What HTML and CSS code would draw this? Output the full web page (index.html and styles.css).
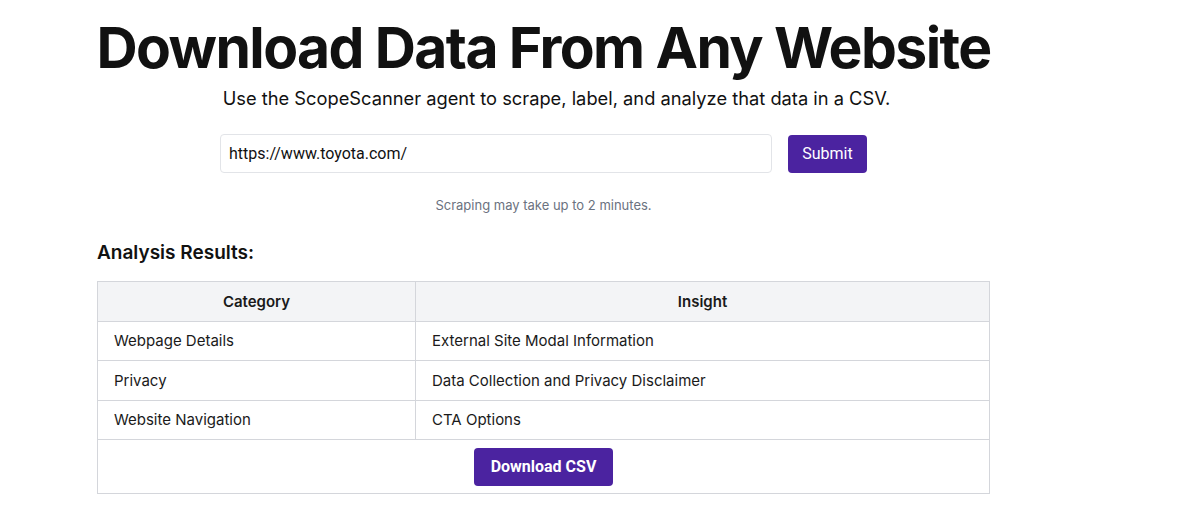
FILE: index.html
```html
<!DOCTYPE html>
<html lang="en">
<head>
<meta charset="utf-8">
<title>ScopeScanner</title>
<link rel="stylesheet" href="styles.css">
</head>
<body>
<main class="page">
  <h1 class="title">Download Data From Any Website</h1>
  <p class="subtitle">Use the ScopeScanner agent to scrape, label, and analyze that data in a CSV.</p>
  <form class="scan-form">
    <input class="url-input" type="text" value="https://www.toyota.com/">
    <button class="btn btn-submit" type="button">Submit</button>
  </form>
  <p class="note">Scraping may take up to 2 minutes.</p>
  <h2 class="results-title">Analysis Results:</h2>
  <table class="results">
    <thead>
      <tr><th class="col-cat">Category</th><th>Insight</th></tr>
    </thead>
    <tbody>
      <tr><td>Webpage Details</td><td>External Site Modal Information</td></tr>
      <tr><td>Privacy</td><td>Data Collection and Privacy Disclaimer</td></tr>
      <tr><td>Website Navigation</td><td>CTA Options</td></tr>
    </tbody>
    <tfoot>
      <tr><td colspan="2" class="foot"><button class="btn btn-download" type="button">Download CSV</button></td></tr>
    </tfoot>
  </table>
</main>
</body>
</html>
```
FILE: styles.css
```css
* { box-sizing: border-box; }
html, body { margin: 0; padding: 0; background: #fff; }
body { font-family: Inter, "Noto Sans", sans-serif; color: #111; }

.page {
  width: 893px;
  margin-left: 97px;
  display: flex;
  flex-direction: column;
  align-items: center;
}

.title {
  margin: 18px 0 0;
  font-size: 57px;
  line-height: 60px;
  font-weight: 700;
  letter-spacing: -1.6px;
  color: #111;
  white-space: nowrap;
}

.subtitle {
  margin: 6px 0 0;
  font-size: 18.3px;
  line-height: 28px;
  color: #111;
  padding-left: 26px;
}

.scan-form {
  display: flex;
  gap: 16px;
  margin-top: 22px;
  align-items: center;
}

.url-input {
  width: 552px;
  height: 39px;
  border: 1px solid #e2e4e8;
  border-radius: 4px;
  padding: 0 8px;
  font-family: Roboto, "Liberation Sans", sans-serif;
  font-size: 16px;
  color: #111;
  outline: none;
}

.btn {
  background: #4b23a0;
  color: #fff;
  border: none;
  border-radius: 4px;
  height: 38px;
  cursor: pointer;
}

.btn-submit {
  width: 79px;
  font-family: Roboto, "Liberation Sans", sans-serif;
  font-size: 16px;
}

.note {
  margin: 22px 0 0;
  font-size: 13px;
  line-height: 20px;
  color: #6b7280;
}

.results-title {
  align-self: flex-start;
  margin: 24px 0 0;
  font-size: 19px;
  line-height: 28px;
  font-weight: 600;
  color: #111;
}

.results {
  margin-top: 14px;
  width: 100%;
  border-collapse: collapse;
  font-size: 15px;
}

.results th,
.results td {
  border: 1px solid #d4d6db;
  height: 39.5px;
  padding: 0 16px;
  text-align: left;
  color: #1a1a1a;
}

.results th {
  background: #f3f4f6;
  text-align: center;
  font-weight: 600;
}

.col-cat { width: 318px; }

.results td.foot {
  height: 54px;
  text-align: center;
}

.btn-download {
  width: 139px;
  font-family: Roboto, "Liberation Sans", sans-serif;
  font-weight: 700;
  font-size: 16px;
  vertical-align: middle;
}
```
